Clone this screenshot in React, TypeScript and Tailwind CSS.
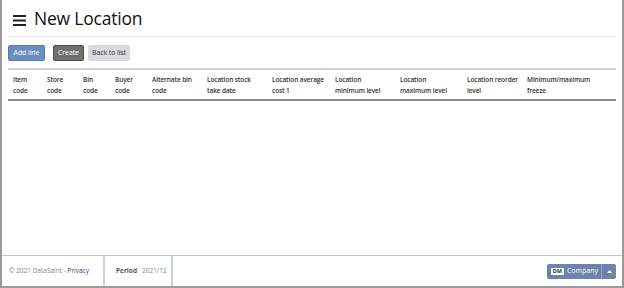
import React from 'react';

const columns = [
  { lines: ['Item', 'code'], w: 'w-[34px]' },
  { lines: ['Store', 'code'], w: 'w-[36px]' },
  { lines: ['Bin', 'code'], w: 'w-[32px]' },
  { lines: ['Buyer', 'code'], w: 'w-[37px]' },
  { lines: ['Alternate bin', 'code'], w: 'w-[55px]' },
  { lines: ['Location stock', 'take date'], w: 'w-[65px]' },
  { lines: ['Location average', 'cost 1'], w: 'w-[63px]' },
  { lines: ['Location', 'minimum level'], w: 'w-[65px]' },
  { lines: ['Location', 'maximum level'], w: 'w-[67px]' },
  { lines: ['Location reorder', 'level'], w: 'w-[60px]' },
  { lines: ['Minimum/maximum', 'freeze'], w: 'flex-1' },
];

export default function App() {
  return (
    <div
      className="w-[624px] h-[288px] bg-white flex flex-col border-l-2 border-r-2 border-b-2 border-[#9a9a9a] text-[#222]"
      style={{ fontFamily: '"Open Sans", "Noto Sans", sans-serif' }}
    >
      <main className="flex-1 px-[6px]">
        {/* Header */}
        <div className="flex items-center gap-[8px] h-[37px] pt-[2px] border-b border-[#e8e8e8] pl-[5px]">
          <svg width="13" height="11" viewBox="0 0 13 11" className="mt-[2px]">
            <rect x="0" y="0" width="13" height="2" fill="#222" />
            <rect x="0" y="4.5" width="13" height="2" fill="#222" />
            <rect x="0" y="9" width="13" height="2" fill="#222" />
          </svg>
          <h1 className="text-[17.5px] font-medium leading-none tracking-[-0.2px] text-[#111]">New Location</h1>
        </div>

        {/* Toolbar */}
        <div className="flex items-center mt-[8px] text-[7px] tracking-[-0.1px]">
          <button className="w-[37px] h-[16px] bg-[#6b8ebf] text-white border border-[#4f7ac0] rounded-[2px]">
            Add line
          </button>
          <button className="ml-[8px] w-[31px] h-[16px] bg-[#6e716c] text-white border border-[#4a4d49] rounded-[2px]">
            Create
          </button>
          <button className="ml-[4px] w-[42px] h-[16px] bg-[#d8dbde] text-[#333] rounded-[2px]">
            Back to list
          </button>
        </div>

        {/* Table */}
        <div className="mt-[7px] border-t-2 border-[#d2d2d2] border-b-2 border-b-[#888]">
          <div className="flex px-[5px] pt-[4px] pb-[3px] text-[6.5px] font-semibold leading-[11px] text-[#333] tracking-[-0.1px]">
            {columns.map((c) => (
              <div key={c.lines[0]} className={`${c.w} shrink-0 pr-[5px] whitespace-nowrap`}>
                {c.lines[0]}
                <br />
                {c.lines[1]}
              </div>
            ))}
          </div>
        </div>
      </main>

      {/* Footer */}
      <footer className="h-[31px] border-t border-[#b7c3d6] flex items-stretch text-[6.5px] text-[#888]">
        <div className="w-[103px] flex items-center pl-[7px] border-r-2 border-[#c6d0de]">
          © 2021 DataSaint -&nbsp;<span className="text-[#3a3a7a]">Privacy</span>
        </div>
        <div className="w-[68px] flex items-center pl-[11px] border-r-2 border-[#c6d0de]">
          <span className="font-bold text-[#555]">Period</span>
          <span className="ml-[5px]">2021/12</span>
        </div>
        <div className="flex-1 flex items-center justify-end pr-[6px]">
          <div className="flex h-[15px] rounded-[2px] overflow-hidden bg-[#6b84ab] text-white text-[7px]">
            <div className="flex items-center pl-[4px] pr-[3px]">
              <span className="bg-white text-[#333] font-bold text-[5.5px] px-[2px] leading-[7px] rounded-[1px]">DM</span>
              <span className="ml-[3px]">Company</span>
            </div>
            <div className="w-[15px] flex items-center justify-center border-l border-[#8ea2c3]">
              <svg width="5" height="3" viewBox="0 0 5 3">
                <path d="M0 3 L2.5 0 L5 3 Z" fill="#fff" />
              </svg>
            </div>
          </div>
        </div>
      </footer>
    </div>
  );
}
